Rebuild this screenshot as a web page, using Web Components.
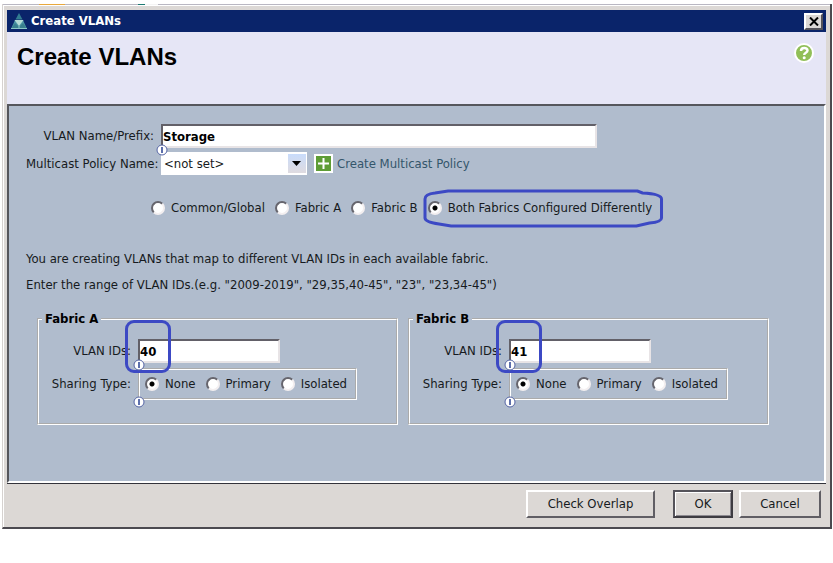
<!DOCTYPE html>
<html lang="en">
<head>
<meta charset="utf-8">
<title>Create VLANs</title>
<style>
    body {
        margin: 0;
        padding: 4px 1px 0 2px;
        background: #fff;
        color: #161a20;
        font: 13px/16px "DejaVu Sans Condensed", "DejaVu Sans", sans-serif;
    }
</style>
</head>
<body>
<dialog-window caption="Create VLANs">
    <page-header slot="header" heading="Create VLANs"></page-header>
    <vlan-form></vlan-form>
    <push-button slot="actions" class="overlap" label="Check Overlap"></push-button>
    <push-button slot="actions" class="ok" label="OK" primary></push-button>
    <push-button slot="actions" class="cancel" label="Cancel"></push-button>
</dialog-window>

<script>
class DialogWindow extends HTMLElement {
    constructor() {
        super();
        this.attachShadow({ mode: 'open' });
        this.shadowRoot.innerHTML = `
            <style>
                :host {
                    display: block;
                    box-sizing: border-box;
                    background: #dcd8d5;
                    border: solid;
                    border-width: 0 2px 2px 1px;
                    border-color: #b9b7c2 #4c4a50 #4c4a50 #d6d2d0;
                }

                .strip {
                    height: 1px;
                    background: linear-gradient(90deg, #b9b7c2 36px, #e8a83c 36px 62px, #b9b7c2 62px 135px, #1d7a72 135px 142px, #f4f4f4 142px 155px, #b9b7c2 155px);
                }

                .frame {
                    padding: 4px 4px 9px 3px;
                    border-left: 1px solid #fff;
                    border-top: 1px solid #fff;
                }

                .titlebar {
                    display: flex;
                    align-items: center;
                    gap: 3px;
                    height: 22px;
                    padding: 0 3px;
                    background: #0a246a;
                    color: #fff;
                    font-weight: bold;
                }

                .caption { flex: 1; }

                .close {
                    display: flex;
                    align-items: center;
                    justify-content: center;
                    width: 19px;
                    height: 17px;
                    padding: 0;
                    background: #dcd8d5;
                    border: 2px solid;
                    border-color: #fff #55535a #55535a #fff;
                }

                .content {
                    background: #b0bccd;
                    border: solid;
                    border-width: 2px;
                    border-color: #55565c #fff #fff #55565c;
                }

                .divider {
                    height: 1px;
                    background: #33333a;
                }

                .actions {
                    display: flex;
                    justify-content: flex-end;
                    padding: 6px 5px 0 0;
                }

                ::slotted(.overlap) { width: 129px; margin-right: 18px; }
                ::slotted(.ok) { width: 60px; margin-right: 6px; }
                ::slotted(.cancel) { width: 82px; }
            </style>

            <div class="strip"></div>
            <div class="frame">
                <div class="titlebar">
                    <svg width="18" height="18" viewBox="0 0 18 18" aria-hidden="true">
                        <path d="M9 1 12.5 7.5h-7z" fill="#327d91"/>
                        <path d="M5 8h8l4 9H1z" fill="#4c96a5"/>
                        <path d="M4.500 8h9L9 14z" fill="#b5dbd5"/>
                        <path d="M1 17 5 11l4 4 4-4 4 6z" fill="#397f8e"/>
                        <path d="M9 14v3M1 16.500h16" stroke="#8bc6c6"/>
                    </svg>
                    <span class="caption"></span>
                    <button class="close" type="button" aria-label="Close">
                        <svg width="10" height="9" viewBox="0 0 10 9"><path d="M1 .5 9 8.500M9 .5 1 8.500" stroke="#000" stroke-width="2"/></svg>
                    </button>
                </div>
                <slot name="header"></slot>
                <div class="content"><slot></slot></div>
                <div class="divider"></div>
                <div class="actions"><slot name="actions"></slot></div>
            </div>
        `;
    }

    connectedCallback() {
        this.shadowRoot.querySelector('.caption').textContent = this.getAttribute('caption');
    }
}

class PageHeader extends HTMLElement {
    constructor() {
        super();
        this.attachShadow({ mode: 'open' });
        this.shadowRoot.innerHTML = `
            <style>
                :host {
                    display: flex;
                    align-items: flex-start;
                    justify-content: space-between;
                    box-sizing: border-box;
                    height: 72px;
                    padding: 11px 12px 0 10px;
                    background: #e6e6f6;
                }

                h1 {
                    margin: 0;
                    color: #000;
                    font: bold 24px/28px "Liberation Sans", Arial, sans-serif;
                }

                button {
                    padding: 0;
                    border: 0;
                    background: none;
                }

                svg { display: block; }
            </style>

            <h1></h1>
            <button type="button" aria-label="Help">
                <svg width="20" height="20" viewBox="0 0 20 20">
                    <circle cx="10" cy="10" r="9" fill="#91bf58" stroke="#fff" stroke-width="2"/>
                    <path d="M7 8C7 4 13.500 4.200 13.500 7.500 13.500 10 10.200 9.500 10.200 12" fill="none" stroke="#fff" stroke-width="2.500"/>
                    <circle cx="10.200" cy="14.800" r="1.500" fill="#fff"/>
                </svg>
            </button>
        `;
    }

    connectedCallback() {
        this.shadowRoot.querySelector('h1').textContent = this.getAttribute('heading');
    }
}

class PushButton extends HTMLElement {
    constructor() {
        super();
        this.attachShadow({ mode: 'open' });
        this.shadowRoot.innerHTML = `
            <style>
                :host { display: block; }

                button {
                    width: 100%;
                    height: 28px;
                    padding: 0;
                    background: #dcd8d5;
                    border: 2px solid;
                    border-color: #fff #605e64 #605e64 #fff;
                    color: inherit;
                    font: inherit;
                }

                :host([primary]) button {
                    border-color: #55535a #3d3b41 #3d3b41 #55535a;
                    box-shadow: inset 1px 1px #fff, inset -1px -1px #8d8a90;
                }
            </style>

            <button type="button"></button>
        `;
    }

    connectedCallback() {
        this.shadowRoot.querySelector('button').textContent = this.getAttribute('label');
    }
}

// small round marker hanging on the lower left corner of a field
class InfoBadge extends HTMLElement {
    constructor() {
        super();
        this.attachShadow({ mode: 'open' });
        this.shadowRoot.innerHTML = `
            <style>
                :host {
                    display: block;
                    position: absolute;
                    left: -5px;
                    bottom: -8px;
                    z-index: 2;
                }

                svg { display: block; }
            </style>

            <svg width="12" height="12" viewBox="0 0 12 12" aria-hidden="true">
                <circle cx="6" cy="6" r="5" fill="#fff" stroke="#5565a5"/>
                <path d="M6 3v6" stroke="#273f91" stroke-width="1.500"/>
            </svg>
        `;
    }
}

class TextField extends HTMLElement {
    static get observedAttributes() {
        return ['label', 'value'];
    }

    constructor() {
        super();
        this.attachShadow({ mode: 'open' });
        this.shadowRoot.innerHTML = `
            <style>
                :host {
                    display: flex;
                    align-items: center;
                    gap: 7px;
                }

                label {
                    width: var(--label-width);
                    text-align: right;
                    white-space: nowrap;
                }

                .box {
                    position: relative;
                    width: var(--field-width);
                }

                input {
                    display: block;
                    box-sizing: border-box;
                    width: 100%;
                    height: 24px;
                    padding: 0;
                    background: #fff;
                    border: 2px solid;
                    border-color: #626068 #e8e4e6 #e8e4e6 #626068;
                    color: #000;
                    font: inherit;
                    font-weight: bold;
                }

                .ring {
                    position: absolute;
                    left: -13px;
                    top: -19px;
                    z-index: 1;
                    box-sizing: border-box;
                    width: 46px;
                    height: 53px;
                    border: 3px solid #3c49c4;
                    border-radius: 9px;
                    pointer-events: none;
                }

                :host(:not([ringed])) .ring { display: none; }
            </style>

            <label for="field"></label>
            <div class="box">
                <input id="field" type="text">
                <info-badge></info-badge>
                <div class="ring"></div>
            </div>
        `;
    }

    attributeChangedCallback(name, oldValue, newValue) {
        if (name === 'label') {
            this.shadowRoot.querySelector('label').textContent = newValue;
        } else {
            this.shadowRoot.querySelector('input').value = newValue;
        }
    }
}

class RadioGroup extends HTMLElement {
    constructor() {
        super();
        this.attachShadow({ mode: 'open' });
        this.shadowRoot.innerHTML = `
            <style>
                :host {
                    display: flex;
                    gap: 10px;
                }

                label {
                    position: relative;
                    display: flex;
                    align-items: center;
                    gap: 6px;
                    white-space: nowrap;
                }

                input {
                    appearance: none;
                    box-sizing: border-box;
                    width: 14px;
                    height: 14px;
                    margin: 0;
                    background: #fff;
                    border: 2px solid;
                    border-color: #66656d #f3eff0 #f3eff0 #66656d;
                    border-radius: 50%;
                }

                input:checked {
                    background: radial-gradient(circle, #000 2px, #fff 3px);
                }

                .ring {
                    position: absolute;
                    inset: -10px -11px -11px -5px;
                    pointer-events: none;
                }

                .ring svg {
                    display: block;
                    width: 100%;
                    height: 100%;
                    overflow: visible;
                }
            </style>
        `;
    }

    connectedCallback() {
        const options = this.getAttribute('options').split('|');
        const selected = this.getAttribute('selected');

        options.forEach((text) => {
            const label = document.createElement('label');
            const input = document.createElement('input');
            input.type = 'radio';
            input.name = 'choice';
            input.checked = text === selected;
            label.append(input, text);

            if (text === this.getAttribute('ringed')) {
                const ring = document.createElement('span');
                ring.className = 'ring';
                ring.innerHTML = `
                    <svg viewBox="0 0 240 37" preserveAspectRatio="none" aria-hidden="true">
                        <path d="M25 1H214L219 3Q238 4 238 9V28Q238 32 226 33L213 36H28L16 34Q2 32 2 28V9Q2 4 12 3Z" fill="none" stroke="#3c49c4" stroke-width="3"/>
                    </svg>`;
                label.append(ring);
            }

            this.shadowRoot.append(label);
        });
    }
}

class FabricPanel extends HTMLElement {
    constructor() {
        super();
        this.attachShadow({ mode: 'open' });
        this.shadowRoot.innerHTML = `
            <style>
                :host {
                    display: block;
                    --label-width: 87px;
                    --field-width: 142px;
                }

                fieldset {
                    min-width: 0;
                    margin: 0;
                    padding: 12px 5px 23px;
                    border: 2px groove #fff;
                }

                legend {
                    padding: 0 3px;
                    margin-left: -2px;
                    color: #000;
                    font-weight: bold;
                }

                .sharing {
                    display: flex;
                    align-items: center;
                    gap: 7px;
                    margin-top: 5px;
                }

                .sharing > span {
                    width: var(--label-width);
                    text-align: right;
                    white-space: nowrap;
                }

                .choices {
                    position: relative;
                }

                .choices radio-group {
                    padding: 6px 8px 6px 5px;
                    border: 2px groove #fff;
                }
            </style>

            <fieldset>
                <legend></legend>
                <text-field label="VLAN IDs:" ringed></text-field>
                <div class="sharing">
                    <span>Sharing Type:</span>
                    <div class="choices">
                        <radio-group role="radiogroup" aria-label="Sharing Type" options="None|Primary|Isolated" selected="None"></radio-group>
                        <info-badge></info-badge>
                    </div>
                </div>
            </fieldset>
        `;
    }

    connectedCallback() {
        this.shadowRoot.querySelector('legend').textContent = this.getAttribute('name');
        this.shadowRoot.querySelector('text-field').setAttribute('value', this.getAttribute('vlan'));
    }
}

class VlanForm extends HTMLElement {
    constructor() {
        super();
        this.attachShadow({ mode: 'open' });
        this.shadowRoot.innerHTML = `
            <style>
                :host {
                    display: block;
                    padding: 18px 55px 56px 17px;
                    --label-width: 128px;
                    --field-width: 436px;
                }

                .policy {
                    display: flex;
                    align-items: center;
                    margin-top: 4px;
                }

                .policy label {
                    width: var(--label-width);
                    margin-right: 7px;
                    text-align: right;
                    white-space: nowrap;
                }

                .combo {
                    position: relative;
                    width: 146px;
                }

                select {
                    appearance: none;
                    display: block;
                    width: 100%;
                    height: 23px;
                    padding: 0 3px;
                    background: #fff;
                    border: 0;
                    border-radius: 0;
                    color: inherit;
                    font: inherit;
                }

                .arrow {
                    position: absolute;
                    top: 2px;
                    right: 1px;
                    pointer-events: none;
                }

                a {
                    display: flex;
                    align-items: center;
                    gap: 4px;
                    margin-left: 7px;
                    color: #34566b;
                    text-decoration: none;
                }

                .scope {
                    margin: 25px 0 0 125px;
                }

                p {
                    margin: 10px 0 0;
                }

                .scope + p {
                    margin-top: 35px;
                }

                .fabrics {
                    display: grid;
                    grid-template-columns: 1fr 1fr;
                    gap: 10px;
                    margin: 18px 0 0 11px;
                }
            </style>

            <text-field label="VLAN Name/Prefix:" value="Storage"></text-field>
            <div class="policy">
                <label for="policy">Multicast Policy Name:</label>
                <div class="combo">
                    <select id="policy"><option>&lt;not set&gt;</option></select>
                    <svg class="arrow" width="18" height="19" viewBox="0 0 18 19" aria-hidden="true">
                        <defs>
                            <linearGradient id="face" x2="0" y2="1">
                                <stop offset="0" stop-color="#c9dcfb"/>
                                <stop offset="1" stop-color="#dfdbe0"/>
                            </linearGradient>
                        </defs>
                        <path d="M0 0h18v19H0z" fill="url(#face)"/>
                        <path d="M4 7h9l-4.500 5z" fill="#000"/>
                    </svg>
                </div>
                <a href="#">
                    <svg width="19" height="19" viewBox="0 0 19 19" aria-hidden="true">
                        <path d="M0 0h19v19H0z" fill="#fff"/>
                        <path d="M2 2h15v15H2z" fill="#5e9d35"/>
                        <path d="M9.500 4v11M4 9.500h11" stroke="#fff" stroke-width="2"/>
                    </svg>
                    Create Multicast Policy
                </a>
            </div>
            <radio-group class="scope" role="radiogroup" aria-label="VLAN scope"
                options="Common/Global|Fabric A|Fabric B|Both Fabrics Configured Differently"
                selected="Both Fabrics Configured Differently"
                ringed="Both Fabrics Configured Differently"></radio-group>
            <p>You are creating VLANs that map to different VLAN IDs in each available fabric.</p>
            <p>Enter the range of VLAN IDs.(e.g. "2009-2019", "29,35,40-45", "23", "23,34-45")</p>
            <div class="fabrics">
                <fabric-panel name="Fabric A" vlan="40"></fabric-panel>
                <fabric-panel name="Fabric B" vlan="41"></fabric-panel>
            </div>
        `;
    }
}

customElements.define('info-badge', InfoBadge);
customElements.define('text-field', TextField);
customElements.define('radio-group', RadioGroup);
customElements.define('fabric-panel', FabricPanel);
customElements.define('vlan-form', VlanForm);
customElements.define('push-button', PushButton);
customElements.define('page-header', PageHeader);
customElements.define('dialog-window', DialogWindow);
</script>
</body>
</html>
